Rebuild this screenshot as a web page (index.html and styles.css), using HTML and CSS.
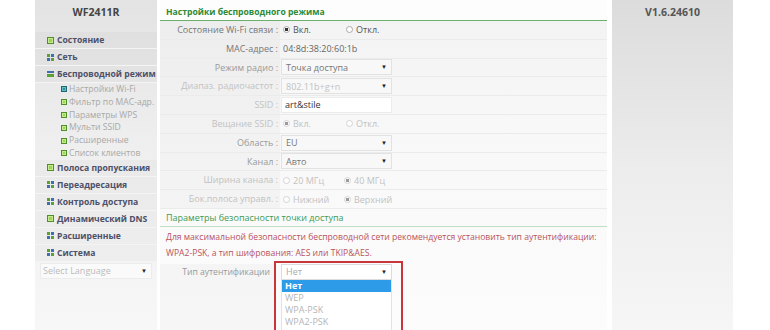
FILE: index.html
```html
<html>
<head>
    <title>WF2411R</title>
    <link rel="stylesheet" href="styles.css">
</head>
<body>
    <div class="page">
        <div class="sidebar">
            <div class="model">WF2411R</div>
            <div class="menu-item"><span class="ico sq"></span>Состояние</div>
            <div class="menu-item"><span class="ico grid"><i></i><i></i><i></i><i></i></span>Сеть</div>
            <div class="menu-item"><span class="ico stripes"></span>Беспроводной режим</div>
            <div class="submenu">
                <div class="sub-item"><span class="ico sq teal"></span>Настройки Wi-Fi</div>
                <div class="sub-item"><span class="ico sq"></span>Фильтр по MAC-адр.</div>
                <div class="sub-item"><span class="ico sq"></span>Параметры WPS</div>
                <div class="sub-item"><span class="ico sq"></span>Мульти SSID</div>
                <div class="sub-item"><span class="ico sq"></span>Расширенные</div>
                <div class="sub-item"><span class="ico sq"></span>Список клиентов</div>
            </div>
            <div class="menu-item"><span class="ico sq"></span>Полоса пропускания</div>
            <div class="menu-item"><span class="ico grid"><i></i><i></i><i></i><i></i></span>Переадресация</div>
            <div class="menu-item"><span class="ico grid"><i></i><i></i><i></i><i></i></span>Контроль доступа</div>
            <div class="menu-item"><span class="ico sq"></span>Динамический DNS</div>
            <div class="menu-item"><span class="ico grid"><i></i><i></i><i></i><i></i></span>Расширенные</div>
            <div class="menu-item"><span class="ico grid"><i></i><i></i><i></i><i></i></span>Система</div>
            <div class="select lang"><span>Select Language</span><span class="arrow">▼</span></div>
        </div>

        <div class="main">
            <div class="title">Настройки беспроводного режима</div>

            <div class="row">
                <div class="label dark">Состояние Wi-Fi связи :</div>
                <div class="value"><span class="radio on"></span><span class="opt dark">Вкл.</span><span class="radio"></span><span class="opt dark">Откл.</span></div>
            </div>
            <div class="row">
                <div class="label dark">MAC-адрес :</div>
                <div class="value text">04:8d:38:20:60:1b</div>
            </div>
            <div class="row">
                <div class="label">Режим радио :</div>
                <div class="value"><div class="select"><span>Точка доступа</span><span class="arrow">▼</span></div></div>
            </div>
            <div class="row">
                <div class="label off">Диапаз. радиочастот :</div>
                <div class="value"><div class="select"><span class="off">802.11b+g+n</span><span class="arrow">▼</span></div></div>
            </div>
            <div class="row">
                <div class="label off">SSID :</div>
                <div class="value"><div class="input">art&amp;stile</div></div>
            </div>
            <div class="row">
                <div class="label off">Вещание SSID :</div>
                <div class="value"><span class="radio on off"></span><span class="opt off">Вкл.</span><span class="radio off"></span><span class="opt off">Откл.</span></div>
            </div>
            <div class="row">
                <div class="label">Область :</div>
                <div class="value"><div class="select"><span>EU</span><span class="arrow">▼</span></div></div>
            </div>
            <div class="row">
                <div class="label">Канал :</div>
                <div class="value"><div class="select"><span>Авто</span><span class="arrow">▼</span></div></div>
            </div>
            <div class="row">
                <div class="label off">Ширина канала :</div>
                <div class="value"><span class="radio off"></span><span class="opt narrow off">20 МГц</span><span class="radio on off"></span><span class="opt off">40 МГц</span></div>
            </div>
            <div class="row">
                <div class="label off">Бок.полоса управл. :</div>
                <div class="value"><span class="radio off"></span><span class="opt narrow off">Нижний</span><span class="radio on off"></span><span class="opt off">Верхний</span></div>
            </div>

            <div class="section">Параметры безопасности точки доступа</div>
            <p class="notice">Для максимальной безопасности беспроводной сети рекомендуется установить тип аутентификации:<br>WPA2-PSK, а тип шифрования: AES или TKIP&amp;AES.</p>

            <div class="auth-row">
                <div class="auth-label">Тип аутентификации</div>
                <div class="highlight">
                    <div class="select auth"><span>Нет</span><span class="arrow">▼</span></div>
                    <div class="options">
                        <div class="option active">Нет</div>
                        <div class="option">WEP</div>
                        <div class="option">WPA-PSK</div>
                        <div class="option">WPA2-PSK</div>
                        <div class="option">WPA/WPA2-PSK</div>
                    </div>
                </div>
            </div>
        </div>

        <div class="aside">
            <div class="version">V1.6.24610</div>
        </div>
    </div>
</body>
</html>
```

FILE: styles.css
```css
body {
    margin: 0;
    width: 770px;
    height: 330px;
    overflow: hidden;
    background: #ffffff;
    font-family: "Open Sans", "Liberation Sans", sans-serif;
    font-size: 9px;
    color: #666;
}

.page {
    display: flex;
    height: 330px;
    margin-left: 35px;
}

/* left menu */
.sidebar {
    width: 122px;
    background: linear-gradient(#e3e3e3, #efefef 45%, #f7f7f7);
}

.model {
    height: 30px;
    line-height: 24px;
    text-align: center;
    font-weight: bold;
    font-size: 10.5px;
    color: #444;
    margin-bottom: 2px;
}

.menu-item {
    height: 16px;
    line-height: 16px;
    padding-left: 12px;
    font-weight: bold;
    font-size: 8.6px;
    color: #4d5068;
    border-bottom: 1px solid #f4f4f4;
    background: rgba(0, 0, 0, 0.025);
    display: flex;
    align-items: center;
    white-space: nowrap;
}

.sub-item {
    height: 12.8px;
    line-height: 12.8px;
    padding-left: 26px;
    font-size: 8.6px;
    color: #a8a8a8;
    display: flex;
    align-items: center;
    white-space: nowrap;
}

.ico {
    width: 7px;
    height: 7px;
    margin-right: 3px;
    flex: none;
    box-sizing: border-box;
}

.sub-item .ico {
    width: 6px;
    height: 6px;
    margin-right: 2px;
}

.ico.sq {
    background: #9bd35a;
    border: 1px solid #4f8f2a;
    box-shadow: inset 0 0 0 1px #c6ec8e;
}

.ico.teal {
    background: #2f8f9a;
    border-color: #1f6670;
    box-shadow: inset 0 0 0 1px #5fc0c8;
}

.ico.grid {
    display: grid;
    grid-template-columns: 3px 3px;
    gap: 1px;
}

.ico.grid i:nth-child(1), .ico.grid i:nth-child(4) {
    background: #5ca033;
}

.ico.grid i:nth-child(2), .ico.grid i:nth-child(3) {
    background: #3f6fb0;
}

.ico.stripes {
    height: 6px;
    background: linear-gradient(#3f6fb0 0 2px, transparent 2px 3px, #5ca033 3px 6px);
}

.select {
    display: flex;
    justify-content: space-between;
    align-items: center;
    box-sizing: border-box;
    width: 111px;
    height: 16px;
    padding: 0 4px;
    background: #f8f8f8;
    border: 1px solid #e2e2e2;
    color: #777;
}

.arrow {
    font-size: 6px;
    color: #222;
}

.lang {
    margin: 1px 0 0 5px;
    width: 112px;
    padding-left: 2px;
    color: #bbb;
    background: #fafafa;
    border-color: #ececec;
}

/* main form */
.main {
    width: 447px;
    margin-left: 3px;
    background: linear-gradient(#f2f2f2, #f8f8f8 40%, #fcfcfc);
}

.title {
    height: 16px;
    line-height: 16px;
    padding: 4px 0 0 6px;
    border-bottom: 1px solid #6bb06b;
    background: #fdfdfd;
    color: #2d8a37;
    font-weight: bold;
    font-size: 8.6px;
}

.row {
    display: flex;
    height: 18.8px;
    box-sizing: border-box;
    border-bottom: 1px solid #ebebeb;
}

.label {
    width: 118px;
    padding-right: 2px;
    text-align: right;
    line-height: 18px;
    color: #9a9a9a;
    background: rgba(0, 0, 0, 0.025);
    white-space: nowrap;
}

.label.dark {
    color: #777;
}

.value {
    display: flex;
    align-items: center;
    padding-left: 1px;
    color: #888;
}

.value.text {
    padding-left: 3px;
    color: #666;
}

.input {
    box-sizing: border-box;
    width: 111px;
    height: 16px;
    line-height: 14px;
    padding-left: 3px;
    background: #ffffff;
    border: 1px solid #ececec;
    color: #333;
}

.radio {
    width: 7px;
    height: 7px;
    margin: 0 3px 0 2px;
    border: 1px solid #aaa;
    border-radius: 50%;
    box-sizing: border-box;
    background: #fff;
}

.radio.on {
    background: radial-gradient(#333 0 1.6px, #fff 2px);
}

.radio.off {
    border-color: #d4d4d4;
}

.radio.on.off {
    background: radial-gradient(#999 0 1.6px, #fff 2px);
}

.opt {
    width: 51px;
    color: #666;
}

.opt.narrow {
    width: 49px;
}

.opt.dark {
    color: #555;
}

.label.off, .opt.off, .select .off {
    color: #c2c2c2;
}

.section {
    height: 17px;
    line-height: 17px;
    padding-left: 6px;
    border-bottom: 1px solid #bfe0c5;
    color: #3c9a55;
}

.notice {
    margin: 2px 0 0 6px;
    line-height: 16px;
    font-size: 8.6px;
    color: #b9535d;
    white-space: nowrap;
}

.auth-row {
    display: flex;
}

.auth-label {
    width: 110px;
    padding-right: 4px;
    margin-top: 3px;
    line-height: 16px;
    text-align: right;
    font-size: 8.6px;
    color: #999;
    background: rgba(0, 0, 0, 0.025);
    white-space: nowrap;
    overflow: hidden;
}

.highlight {
    width: 120px;
    height: 80px;
    padding: 1px 0 0 5px;
    border: 2px solid #c9363a;
    border-bottom: none;
}

.select.auth {
    background: #fff;
    border-color: #dcdcdc;
    color: #aaa;
}

.options {
    width: 111px;
    box-sizing: border-box;
    background: #fff;
    border: 1px solid #e2e2e2;
    border-top: none;
}

.option {
    height: 12px;
    line-height: 12px;
    padding-left: 3px;
    color: #b5b5b5;
}

.option.active {
    background: #2e9be8;
    color: #fff;
    font-weight: bold;
}

/* right column */
.aside {
    width: 121px;
    margin-left: 5px;
    background: linear-gradient(#dcdcdc, #ececec 50%, #f6f6f6);
}

.version {
    line-height: 24px;
    text-align: center;
    font-weight: bold;
    font-size: 10.5px;
    color: #555;
}
```
